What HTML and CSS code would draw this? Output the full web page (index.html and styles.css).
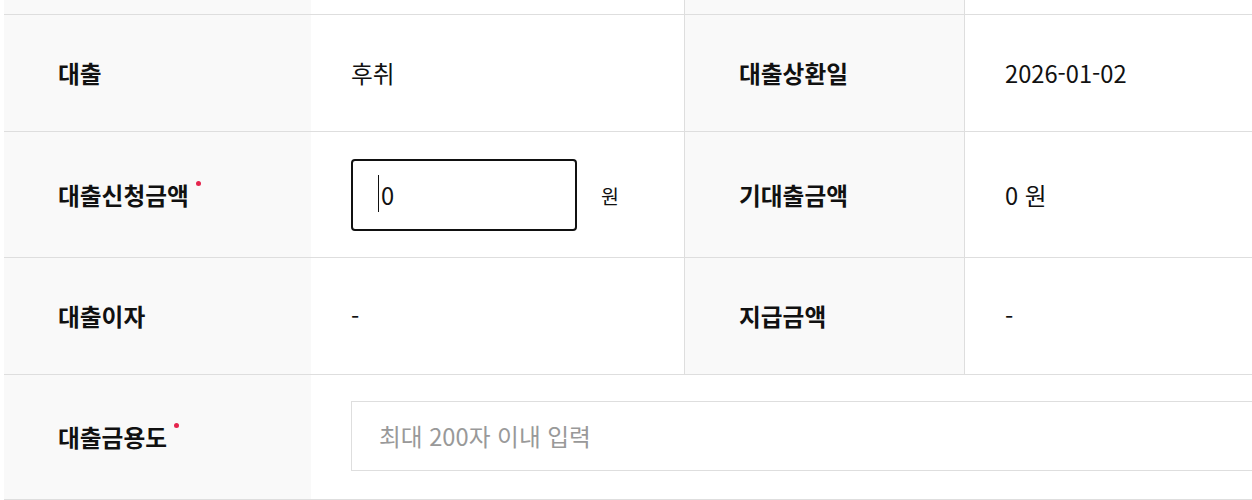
FILE: index.html
```html
<!DOCTYPE html>
<html lang="ko">
<head>
<meta charset="utf-8">
<link rel="stylesheet" href="styles.css">
</head>
<body>
<div class="table">
  <div class="row row-cut">
    <div class="th"></div>
    <div class="td"></div>
    <div class="th th-mid"></div>
    <div class="td"></div>
  </div>
  <div class="row">
    <div class="th">대출</div>
    <div class="td">후취</div>
    <div class="th th-mid">대출상환일</div>
    <div class="td">2026-01-02</div>
  </div>
  <div class="row row-input row-amount">
    <div class="th"><span class="req">대출신청금액</span></div>
    <div class="td">
      <div class="field-wrap">
        <input class="field field-focus" type="text" value="0">
        <span class="caret"></span>
      </div>
      <span class="unit">원</span>
    </div>
    <div class="th th-mid">기대출금액</div>
    <div class="td">0 원</div>
  </div>
  <div class="row">
    <div class="th">대출이자</div>
    <div class="td">-</div>
    <div class="th th-mid">지급금액</div>
    <div class="td">-</div>
  </div>
  <div class="row row-input row-wide">
    <div class="th"><span class="req">대출금용도</span></div>
    <div class="td td-wide">
      <input class="field field-long" type="text" placeholder="최대 200자 이내 입력">
    </div>
  </div>
</div>
</body>
</html>
```

FILE: styles.css
```css
* { box-sizing: border-box; }
html, body { margin: 0; padding: 0; background: #fff; overflow: hidden; }
body {
  padding-left: 4px;
  font-family: "Noto Sans CJK KR", "Noto Sans", sans-serif;
  font-size: 23.7px;
  color: #111;
}
.table { width: 1400px; }
.row {
  display: grid;
  grid-template-columns: 307px 373px 281px 1fr;
  border-bottom: 1px solid #dedede;
  min-height: 117px;
}
.row-cut { min-height: 0; height: 15px; }
.row-wide { grid-template-columns: 307px 1fr; }
.th {
  background: #f9f9f9;
  font-weight: 700;
  display: flex;
  align-items: center;
  padding-left: 54px;
}
.th-mid {
  border-left: 1px solid #dedede;
  border-right: 1px solid #dedede;
}
.td {
  display: flex;
  align-items: center;
  padding-left: 40px;
}
.row-input .td { padding-top: 26px; padding-bottom: 28px; }
.row-amount .td { padding-top: 27px; padding-bottom: 26px; }
.req::after {
  content: "";
  display: inline-block;
  width: 5px;
  height: 5px;
  border-radius: 50%;
  background: #e5254d;
  margin-left: 7px;
  vertical-align: top;
  margin-top: 3px;
}
.field-wrap { position: relative; display: flex; }
.field {
  font-family: inherit;
  font-size: 23.7px;
  color: #111;
  background: #fff;
  outline: none;
  margin: 0;
}
.field-focus {
  width: 226px;
  height: 72px;
  border: 2px solid #111;
  border-radius: 4px;
  padding: 0 0 0 28px;
}
.caret {
  position: absolute;
  left: 27px;
  top: 16px;
  width: 1px;
  height: 37px;
  background: #111;
}
.unit { margin-left: 24px; font-size: 19.5px; }
.td-wide { padding-right: 0; }
.field-long {
  width: 1000px;
  height: 70px;
  border: 1px solid #dedede;
  border-radius: 0;
  padding: 0 0 0 27px;
}
.field-long::placeholder { color: #999; }
```
